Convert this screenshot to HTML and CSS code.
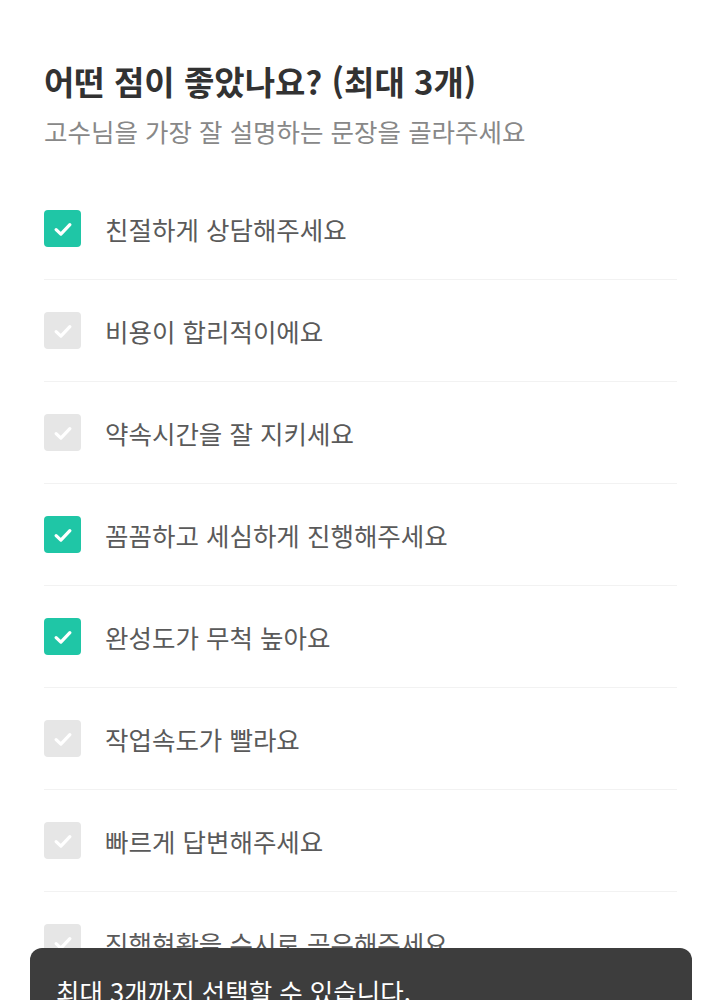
FILE: index.html
```html
<!DOCTYPE html>
<html lang="ko">
<head>
<meta charset="utf-8">
<link rel="stylesheet" href="styles.css">
</head>
<body>
<main class="page">
  <h1 class="title">어떤 점이 좋았나요? (최대 3개)</h1>
  <p class="subtitle">고수님을 가장 잘 설명하는 문장을 골라주세요</p>
  <ul class="options">
    <li class="option checked"><span class="box"><svg viewBox="0 0 24 24"><path d="M6.5 12.5l3.8 3.6 7.2-7.6"/></svg></span><span class="label">친절하게 상담해주세요</span></li>
    <li class="option"><span class="box"><svg viewBox="0 0 24 24"><path d="M6.5 12.5l3.8 3.6 7.2-7.6"/></svg></span><span class="label">비용이 합리적이에요</span></li>
    <li class="option"><span class="box"><svg viewBox="0 0 24 24"><path d="M6.5 12.5l3.8 3.6 7.2-7.6"/></svg></span><span class="label">약속시간을 잘 지키세요</span></li>
    <li class="option checked"><span class="box"><svg viewBox="0 0 24 24"><path d="M6.5 12.5l3.8 3.6 7.2-7.6"/></svg></span><span class="label">꼼꼼하고 세심하게 진행해주세요</span></li>
    <li class="option checked"><span class="box"><svg viewBox="0 0 24 24"><path d="M6.5 12.5l3.8 3.6 7.2-7.6"/></svg></span><span class="label">완성도가 무척 높아요</span></li>
    <li class="option"><span class="box"><svg viewBox="0 0 24 24"><path d="M6.5 12.5l3.8 3.6 7.2-7.6"/></svg></span><span class="label">작업속도가 빨라요</span></li>
    <li class="option"><span class="box"><svg viewBox="0 0 24 24"><path d="M6.5 12.5l3.8 3.6 7.2-7.6"/></svg></span><span class="label">빠르게 답변해주세요</span></li>
    <li class="option"><span class="box"><svg viewBox="0 0 24 24"><path d="M6.5 12.5l3.8 3.6 7.2-7.6"/></svg></span><span class="label">진행현황을 수시로 공유해주세요</span></li>
  </ul>
</main>
<div class="toast">최대 3개까지 선택할 수 있습니다.</div>
</body>
</html>
```

FILE: styles.css
```css
html, body {
  margin: 0;
  padding: 0;
  background: #ffffff;
}
body {
  font-family: "Noto Sans CJK KR", "Noto Sans", sans-serif;
  overflow: hidden;
  height: 1000px;
}
.page {
  padding: 61px 45px 0 44px;
}
.title {
  margin: 0;
  font-size: 33px;
  line-height: 40px;
  font-weight: 700;
  color: #323232;
}
.subtitle {
  margin: 13px 0 0;
  font-size: 25.5px;
  line-height: 34px;
  color: #888888;
}
.options {
  list-style: none;
  margin: 30px 0 0;
  padding: 0;
}
.option {
  display: flex;
  align-items: center;
  gap: 24px;
  height: 101px;
  border-bottom: 1px solid #f2f2f2;
}
.box {
  width: 37px;
  height: 37px;
  border-radius: 4px;
  background: #e6e6e6;
  display: flex;
  align-items: center;
  justify-content: center;
  flex-shrink: 0;
}
.box svg {
  width: 30px;
  height: 30px;
  fill: none;
  stroke: #ffffff;
  stroke-width: 2.6;
  stroke-linecap: round;
  stroke-linejoin: round;
}
.option.checked .box {
  background: #1fc6a6;
}
.label {
  font-size: 25.5px;
  line-height: 34px;
  color: #5a5a5a;
}
.toast {
  position: fixed;
  left: 30px;
  right: 30px;
  top: 948px;
  height: 100px;
  box-sizing: border-box;
  padding: 26px 26px 0;
  background: #3d3d3d;
  border-radius: 12px;
  color: #ffffff;
  font-size: 25.5px;
  line-height: 34px;
}
```
